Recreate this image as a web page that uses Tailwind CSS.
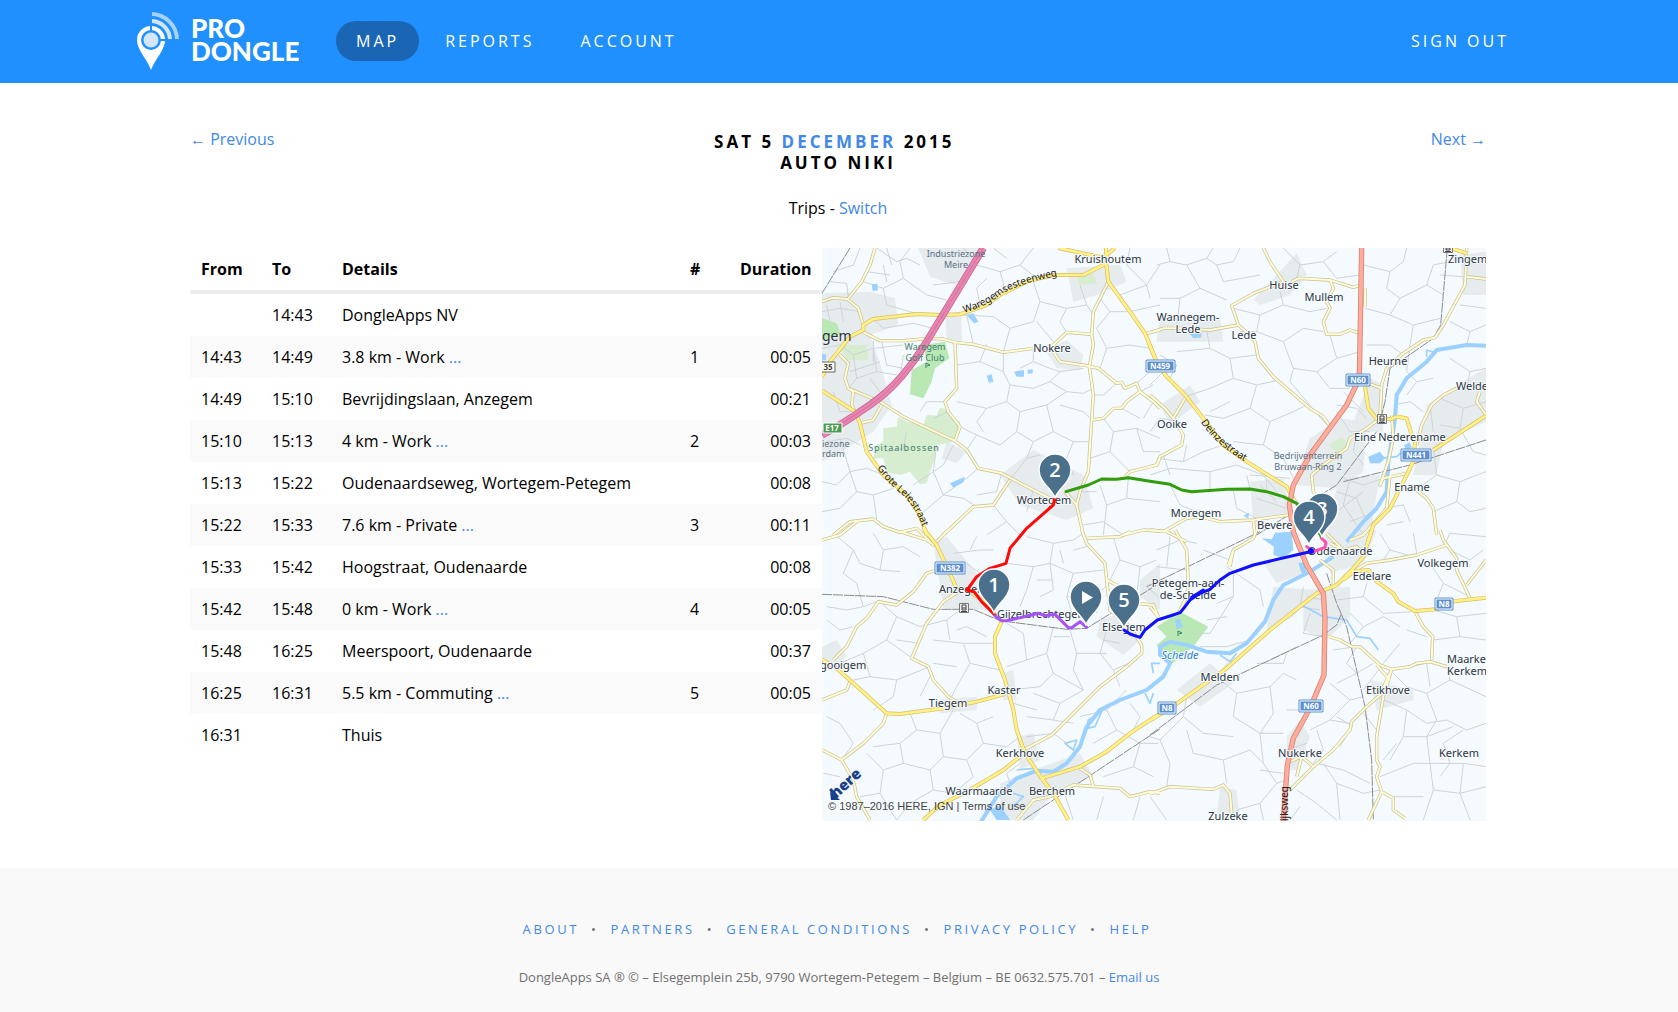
<!DOCTYPE html>
<html lang="en">
<head>
    <meta charset="UTF-8">
    <meta name="viewport" content="width=device-width, initial-scale=1.0">
    <title>Pro Dongle - Trips</title>
    <script src="https://cdn.jsdelivr.net/npm/@tailwindcss/browser@4"></script>
</head>
<body class="min-h-screen flex flex-col bg-white text-black text-base font-['Open_Sans',sans-serif]">

    <header class="bg-[#2090ff] text-white">
        <div class="mx-auto max-w-[1404px] h-[83px] pr-3 pb-[2px] flex items-center">
            <a href="#" class="flex items-center gap-3 w-[199px]" aria-label="Pro Dongle">
                <svg class="w-[42px] h-[60px]" viewBox="0 0 42 60" fill="none">
                    <path d="M14 59C10 48 0 39 0 29a14 14 0 0 1 28 0C28 39 18 48 14 59z" fill="#fff"/>
                    <path d="M14 12v10M21 29h9" stroke="#2090ff" stroke-width="2"/>
                    <circle cx="14" cy="29" r="10" fill="#2090ff"/>
                    <circle cx="14" cy="29" r="7.500" fill="#d2e7ff"/>
                    <path d="M15 10A19 19 0 0 1 33 28" stroke="#d2e7ff" stroke-width="4"/>
                    <path d="M15 3A26 26 0 0 1 40 28" stroke="#a4d1ff" stroke-width="4"/>
                </svg>
                <span class="pb-[2px] font-['Lato',sans-serif] font-black text-[26px] leading-[23px]">PRO<br>DONGLE</span>
            </a>
            <nav class="flex flex-1 items-center gap-[6px] font-medium tracking-[3px]">
                <a href="#" class="h-10 px-5 leading-10 rounded-full bg-[#1a66b5]">MAP</a>
                <a href="#" class="h-10 px-5 leading-10">REPORTS</a>
                <a href="#" class="h-10 px-5 leading-10">ACCOUNT</a>
                <a href="#" class="h-10 px-5 leading-10 ml-auto">SIGN OUT</a>
            </nav>
        </div>
    </header>

    <main class="mx-auto w-full max-w-[1298px] pr-[2px] pt-11 pb-[47px]">
        <div class="flex justify-between pb-7">
            <a href="#" class="flex-1 text-[#4288e6]"><span class="font-['Liberation_Sans',sans-serif]">←</span> Previous</a>
            <div class="text-center">
                <h1 class="pt-1 text-[17px] leading-[21px] font-bold tracking-[3px]">SAT 5 <a href="#" class="text-[#4288e6]">DECEMBER</a> 2015&nbsp;<br>AUTO NIKI</h1>
                <p class="pt-[23px]">Trips - <a href="#" class="text-[#4288e6]">Switch</a></p>
            </div>
            <a href="#" class="flex-1 text-right text-[#4288e6]">Next <span class="font-['Liberation_Sans',sans-serif]">→</span></a>
        </div>

        <div class="grid grid-cols-[632fr_664fr] items-start">
            <table class="w-full table-fixed text-left">
                <colgroup>
                    <col class="w-[71px]"><col class="w-[70px]"><col><col class="w-[50px]"><col class="w-[93px]">
                </colgroup>
                <thead>
                    <tr class="h-11 border-b-4 border-[#ededed] font-bold">
                        <th class="px-[11px]">From</th><th class="px-[11px]">To</th><th class="px-[11px]">Details</th><th class="px-[11px]">#</th><th class="px-[11px] text-right">Duration</th>
                    </tr>
                </thead>
                <tbody class="[&_td]:px-[11px] [&_td]:py-[9px] [&_td:last-child]:text-right [&_a]:text-[#4288e6] [&_tr:nth-child(even)]:bg-[#fafafa]">
                    <tr><td></td><td>14:43</td><td>DongleApps NV</td><td></td><td></td></tr>
                    <tr><td>14:43</td><td>14:49</td><td>3.8 km - Work <a href="#">...</a></td><td>1</td><td>00:05</td></tr>
                    <tr><td>14:49</td><td>15:10</td><td>Bevrijdingslaan, Anzegem</td><td></td><td>00:21</td></tr>
                    <tr><td>15:10</td><td>15:13</td><td>4 km - Work <a href="#">...</a></td><td>2</td><td>00:03</td></tr>
                    <tr><td>15:13</td><td>15:22</td><td>Oudenaardseweg, Wortegem-Petegem</td><td></td><td>00:08</td></tr>
                    <tr><td>15:22</td><td>15:33</td><td>7.6 km - Private <a href="#">...</a></td><td>3</td><td>00:11</td></tr>
                    <tr><td>15:33</td><td>15:42</td><td>Hoogstraat, Oudenaarde</td><td></td><td>00:08</td></tr>
                    <tr><td>15:42</td><td>15:48</td><td>0 km - Work <a href="#">...</a></td><td>4</td><td>00:05</td></tr>
                    <tr><td>15:48</td><td>16:25</td><td>Meerspoort, Oudenaarde</td><td></td><td>00:37</td></tr>
                    <tr><td>16:25</td><td>16:31</td><td>5.5 km - Commuting <a href="#">...</a></td><td>5</td><td>00:05</td></tr>
                    <tr><td>16:31</td><td></td><td>Thuis</td><td></td><td></td></tr>
                </tbody>
            </table>

            <svg class="w-full h-auto bg-[#f4fafd]" viewBox="0 0 664 573" fill="none" stroke-linejoin="round">
                <defs>
                    <!-- the four map sheets are drawn at 3x -->
                    <g id="minor">
                        <g transform="translate(-2 -3) scale(.33333)">
                            <path d="M170 9L230 50 260 40 300 60M85 160L130 110 190 130 250 100 320 150 380 165M250 100L240 50 270 9M190 130L200 180 270 200 290 207M140 80L210 90M160 222L190 250 280 235 340 250M430 9L470 60 540 80 600 60 640 9M540 80L560 150M600 60L650 100M500 100L470 130 480 180M640 110L660 170 640 230 570 250 520 215 430 210M570 250L550 322M660 170L740 190 800 180 820 210M740 190L720 230 740 262M780 120L800 180M650 230L700 290M440 210L460 298M6 200L60 190 120 200M20 180L30 230M60 170L70 230M6 310L60 300 100 330 160 310 250 300M100 330L110 400 85 430M160 310L170 380 110 400M170 380L230 390M160 287L160 350M40 440L60 500 105 500M185 290L200 360 250 370M150 400L180 440M90 380L180 350M250 330L240 400 200 440"/>
                            <path d="M410 360L480 350 550 380 570 420 640 430 690 410 720 380 790 370M480 350L500 298M550 322L550 380M640 310L640 350 690 370 720 380M640 350L600 370M570 420L560 470 500 490 410 470M560 470L600 500 680 480 740 440 790 445 820 430M690 410L740 440M600 500L590 560 540 600 470 570 420 545M590 560L640 590 700 560 760 590 810 590M680 480L700 560M720 480L790 500 815 525M640 590L620 640 570 705M620 640L660 630M760 590L740 640 760 690M470 570L440 615M500 490L470 530 490 560M840 370L860 310 930 300 990 310M860 310L830 250 870 200 930 200M870 200L840 160M930 200L1020 180M900 150L980 120 1020 60M930 9L920 60 980 120M980 120L990 160M890 415L850 450 820 450M950 415L990 380M960 440L1000 420M850 520L880 560 950 550 1020 580M880 560L870 620 810 640M870 620L930 680M950 550L970 620 1020 620M905 490L960 520M1000 470L970 520"/>
                            <path d="M20 590L80 580 120 600M60 580L90 680 50 720 6 710M90 680L140 670 190 690M90 680L110 740 60 790 6 800M110 740L160 750 220 730M160 750L170 822M260 560L250 610 200 620M350 600L340 680 280 720M400 600L370 660 340 680 370 750 300 810M370 750L430 760 470 785M475 670L440 700 370 750M545 685L530 740 470 750M370 470L320 470 300 500M385 500L340 520M520 780L560 830 600 870M560 830L500 870M640 735L620 800M840 720L860 780 850 870M860 780L920 760 1020 770M925 698L920 760M790 840L850 830 910 870M780 740L830 740M30 110L80 115 85 160M120 9L100 60 40 80M200 9L215 60 M190 60L200 110M340 120L420 110M520 9L560 40"/>
                        </g>
                        <g transform="translate(328 -3) scale(.33333)">
                            <path d="M20 60L60 50 110 60 150 130 230 165M60 50L50 9M110 60L170 40 200 60 250 50 270 9M150 130L90 160 30 160M90 160L80 250M170 40L190 9M200 60L220 110 330 90M400 9L450 60 440 100M450 60L520 50 560 20M520 50L560 100 630 90M640 60L720 80 760 50 770 9M720 80L710 130 750 160 830 120 880 150M830 120L850 60 900 50M750 160L720 210 645 190M720 210L790 240 870 220M790 240L780 300M250 190L330 210 400 180 480 200 530 190M330 210L320 260 270 260M400 180L390 140M320 260L400 290 460 250 520 260M400 290L430 370 420 410 530 540M430 370L500 380 560 340 630 320M500 380L540 430 600 430M560 340L540 270M320 330L240 340 180 310 80 320M180 310L170 255M240 340L250 400 180 430 105 455M250 400L320 420 390 405M320 420L300 490 220 520 165 510M300 490L360 530 430 500 470 480M360 530L340 600 250 590M340 600L400 640 430 700M30 330L80 360 60 400M0 420L40 380M0 560L30 520 90 530M180 500L240 470M760 330L720 300 650 300M940 60L1008 40M930 180L1008 190M900 230L960 260 1008 240M940 95L870 90M960 260L950 300"/>
                            <path d="M20 640L100 650 160 620 220 600M0 690L60 670 180 680 260 660 340 690 380 740M100 650L110 600M60 718L90 780 140 800M180 740L180 680M60 690L40 630M250 735L260 790 320 820M300 732L290 690M300 690L420 700M330 720L380 770M350 700L350 740M320 760L410 790M900 340L960 380 1008 370M960 380L950 430M870 460L940 490 1008 470M940 490L930 550 870 540M930 550L970 620 1008 630M780 300L770 380 800 410 850 400M770 450L800 410M840 480L850 560M850 610L860 690 930 710 1008 680M860 690L790 740M930 710L920 770 960 800 1008 790M920 770L850 800M730 480L780 470 820 500M560 480L620 490 650 520M560 500L600 560 660 560M580 440L640 500M620 560L610 620 640 660M580 700L640 720 700 700M560 740L620 760 650 830M600 700L580 780 640 870M640 740L560 800M600 830L680 800M700 790L760 780 780 830M710 840L760 830"/>
                        </g>
                        <g transform="translate(-2 282) scale(.33333)">
                            <path d="M40 10L100 60 120 100 180 120 240 125M100 60L70 130 110 160 130 230M180 120L190 60 250 50 300 80M190 60L160 10M20 230L80 240 130 230 170 215M20 270L60 300 100 290M180 215L230 260 300 290 380 270 420 240M230 260L200 330 130 370 60 400M200 330L270 380M230 330L300 340M130 370L150 440 100 450M150 440L230 450 330 410M230 450L220 500 160 540M300 500L330 440M340 330L430 340 520 340M380 270L390 330M430 340L450 400 540 420M450 400L410 470 390 510M410 410L340 400M410 300L440 290 500 320M560 280L610 310 620 390 560 410M620 390L680 370 700 290M680 370L700 430 660 470 570 480M700 320L750 320M750 300L770 370 860 370M770 370L760 420 790 480M860 300L840 370 880 420 950 390M850 330L900 340M700 430L790 480 720 520 640 490M720 520L700 570 620 560M700 570L760 580M580 520L650 540"/>
                            <path d="M620 20L700 40 760 30 790 10M700 40L690 100 640 110 560 100M690 100L760 130 850 120M690 100L700 180 660 200M640 110L620 180 600 230M760 130L740 200 760 260M740 200L830 190 860 170M830 190L830 250M880 20L900 90 960 110 1010 90M900 90L870 150M960 110L950 200 910 180M980 170L1015 200M650 150L700 150M730 100L720 60M800 50L760 60M520 60L480 60 400 70M440 100L480 130M450 60L470 20M20 560L60 580 100 640 65 690M160 650L240 640 290 600 360 610 400 540M240 640L250 700 190 720 140 670M290 600L270 550M360 610L370 680 330 720 250 700M370 680L440 690 490 640 560 650 600 620M490 640L470 580 520 560M440 690L460 740 400 790M330 720L340 780 270 820 230 870M190 720L180 790 120 800M180 790L230 870M10 730L60 740M340 780L400 790M420 550L470 580M600 700L560 730 570 760M620 620L700 610 740 640M780 560L860 540 920 480M860 540L890 600 820 640M890 600L960 640 1015 640M930 520L960 560 940 600M960 640L940 710 850 740M940 710L1000 740M850 800L830 870M960 800L940 870M730 780L760 870M880 420L900 470"/>
                        </g>
                        <g transform="translate(328 282) scale(.33333)">
                            <path d="M20 60L90 30 140 40M20 110L110 120M60 20L50 110M160 60L240 90M230 110L330 180 340 230M250 130L250 200 180 310 130 310M250 200L200 220M170 270L230 260M150 350L230 350 300 330M240 390L200 440 260 490 250 560 330 610 400 610M260 490L360 470 400 430 440 450M360 470L370 550 330 610M320 400L400 400 410 370M360 390L440 350M110 500L100 560 160 610 250 620M100 560L30 630 0 620M110 600L130 670 220 690M30 630L60 700 50 770M220 690L230 760M220 690L300 660 340 700M330 610L340 700 380 760 330 820 260 840M380 760L410 750M330 820L340 870M0 800L50 870M540 460L600 510 640 500M600 510L540 570 480 600M540 570L600 580M500 600L520 660 490 700M640 480L700 400 750 340M620 350L590 400 620 430 670 400M620 430L560 460M550 360L620 350M600 250L640 290 700 260 750 290M640 290L600 340M560 210L640 200 650 160M640 200L700 250 790 245M460 170L450 230 510 240M470 200L520 210M480 250L460 310 520 320"/>
                            <path d="M690 10L720 60 790 80M790 10L800 70M720 60L700 90M880 50L900 10 1008 20M900 60L960 90 1000 60M840 100L880 160 860 210M880 160L960 200M850 240L920 260 1008 250M920 260L930 320 1008 330M930 320L850 330M770 300L830 320M780 410L830 400 840 470M730 430L770 470 830 490 860 570 830 620 840 700M830 490L900 450 1008 500M900 450L890 410M770 540L830 580 890 570 950 600 1008 580M830 620L910 590M680 500L770 540 760 620 720 690 M760 620L830 620M740 640L700 690M640 550L680 600M560 560L610 590M520 700L560 760 640 790 690 780M560 760L570 870M440 780L500 820 560 870M450 830L420 870M500 700L580 720 660 760M690 740L790 700 840 700 940 700 1008 710M840 700L850 780 820 870M850 780L930 790 1008 770M930 790L960 870M730 800L820 800M940 700L930 790M870 740L900 700 880 640 940 600M600 600L570 650 M410 540L460 540M410 660L470 640M330 720L400 730"/>
                        </g>
                    </g>
                    <g id="local">
                        <g transform="translate(-2 -3) scale(.33333)">
                            <path d="M165 9L150 60 125 110 85 160M6 170L40 158 82 162 115 190 130 240M130 262L180 287 250 287 330 280 370 282 405 292 460 298 550 322 640 310M405 292L410 430 375 470 385 500 420 545 405 588M85 430L180 470 250 515 405 588 440 615 475 670 545 685 640 735 700 765M60 330L85 355 75 400 85 430 100 440 95 480 105 500M120 535L160 525 185 480M700 300L740 262 815 268M865 110L820 200 815 268 820 300 808 365 820 450 815 525 805 680 780 740 770 780 790 870M700 320L720 350 800 362 835 370 890 415 905 412 915 430 950 415 960 440 920 470 905 490 880 490 850 520 815 525M960 440L1000 470 1020 490M735 740L770 780M570 705L520 780 460 785 370 870M40 870L90 830 160 822 190 845 240 862 290 850 330 890M980 265L1020 255M915 695L930 680 1010 660 1020 640M910 870L970 855 1020 858"/>
                        </g>
                        <g transform="translate(328 -3) scale(.33333)">
                            <path d="M340 9L360 50 400 110M425 110L445 100 540 105 610 127 635 120M400 110L310 145 245 182 265 240 180 255 90 250 40 250 0 263M540 105L550 130 530 170 540 190 520 230 530 268 570 268 600 255 630 265M265 240L290 262 315 290 325 340 370 395 480 490 520 515 540 545M105 460L70 520 100 570 95 600 30 635 20 660 0 665M0 450L45 490 70 520M950 9L945 120 880 240 855 278 820 285 760 325 710 370 695 420 690 510M655 415L695 430M645 130L645 185M950 95L1008 102M920 430L880 450 845 480 815 540 800 600M1008 510L980 470 990 440M690 520L650 550 600 580 590 610 520 660 485 690 490 740 520 780M725 510L730 580 715 650 690 720 700 700 770 685M720 690L710 790 640 870 600 885M780 720L830 760 850 790 860 870M40 860L110 820 150 815 210 830 310 825 415 810M310 825L315 870M430 760L450 790M0 855L50 860 110 890"/>
                        </g>
                        <g transform="translate(-2 282) scale(.33333)">
                            <path d="M6 30L60 15 110 -25M320 30L340 45 385 0M320 30L240 5M350 120L320 130 280 185 230 225 175 215 140 265 110 290 80 350 40 390M415 185L370 215 320 280 275 385 325 410 340 450 385 500 410 515M200 550L190 580 130 640 65 690 6 660M65 690L100 750 110 800 150 870M785 0L800 40 855 100 860 150 870 240 930 290 965 345 965 370 920 410 840 470 770 540 695 615 610 660M860 150L890 165 950 220 1000 225 1015 260M800 25L900 20 930 5M6 510L80 480 90 455M690 800L760 765 900 775 930 800 990 785 1020 790M780 715L810 735 820 770M690 800L640 810 590 870"/>
                        </g>
                        <g transform="translate(328 282) scale(.33333)">
                            <path d="M75 0L110 60 115 160 110 200 85 250M250 60L240 110M320 0L310 25 250 60 235 105M0 230L25 262M530 318L570 330 605 350 630 350 690 405 725 418 780 410 800 400 840 395 890 410M725 418L690 495 650 530 605 575 600 600 550 660 490 710 420 780M725 418L700 500 680 620 680 690 690 710 680 740 695 785 730 805 730 840 765 865M680 405L720 450M695 785L655 870M795 245L820 290 848 320 845 390M600 130L650 100 720 90 800 75 890 45M870 0L880 30 920 85 920 120 960 205M1008 90L950 165M530 10L560 40 580 60M510 90L550 120 550 170M0 792L60 770 190 778 220 765 240 790 245 850M420 695L455 680 490 710M455 680L440 740M650 80L620 50 580 60 540 40"/>
                        </g>
                    </g>
                    <g id="main">
                        <g transform="translate(-2 -3) scale(.33333)">
                            <path d="M6 395L30 350 90 275 130 255 130 240 160 222 290 207 360 210 420 208 500 180 540 150 620 110 700 90 790 90 850 60 860 50 858 9M715 9L850 38 885 9M858 50L865 110 930 200 975 265 1010 350 1040 395M6 437L105 500 120 535 140 620 190 690 260 750 300 810 320 870"/>
                        </g>
                        <g transform="translate(328 -3) scale(.33333)">
                            <path d="M-5 290L15 340 50 395 105 450 160 520 220 600 290 650 410 725 430 760M645 425L655 490 680 522 725 522 740 515 770 520 785 570 795 590 790 650 720 790 670 840 655 890M850 615L1008 512M900 9L950 25"/>
                        </g>
                        <g transform="translate(-2 282) scale(.33333)">
                            <path d="M310 -5L350 45 385 120 410 175 440 180 480 205 545 275 525 320 525 370 555 450 580 540 590 600 615 670 665 745 700 790 745 870M6 388L50 415 200 550 240 552 370 535 470 515 555 492M310 870L360 825 440 785 550 720 600 680M665 745L780 710 860 665 930 610 1020 550"/>
                        </g>
                        <g transform="translate(328 282) scale(.33333)">
                            <path d="M0 572L60 535 230 415 360 300 500 190 560 165 610 115 640 80 665 0M580 150L610 125 655 120 680 155 730 190 745 215 795 243 860 238 900 215 1008 203"/>
                        </g>
                    </g>
                    <g id="river">
                        <path transform="translate(328 -3) scale(.33333)" d="M1008 302L950 300 860 315 830 350 770 400 740 450 735 520 715 650 710 740 680 790 640 830 590 890"/>
                        <path transform="translate(328 282) scale(.33333)" d="M550 80L480 125 400 165 370 210 345 275 290 340 240 370 170 365 110 345 60 335 30 350 30 375 60 400 40 440 -10 480 -90 510 -150 540 -190 590 -210 650 -250 700 -290 725 -340 722 -400 745 -460 800 -510 880"/>
                    </g>
                    <path id="n60" transform="translate(328 -3) scale(.33333)" d="M635 9L632 180 628 400 590 480 480 630 430 720 418 780 430 860 470 960 520 1045 525 1120 522 1290 480 1390 430 1480 412 1560 400 1730"/>
                    <path id="pin" d="M0 0C-3 -9 -16 -16 -16 -28a16 16 0 0 1 32 0C16 -16 3 -9 0 0z" fill="#4b708c" stroke="#fff" stroke-width="1.500"/>
                    <g id="station"><path d="M-4.500 -4.500h9v9h-9z" fill="#eee" stroke="#777"/><path d="M-2 -3h4v5h-4zM-2 0h4M-3 3.500h6" stroke="#444"/></g>
                    <path id="deinze" d="M379 174Q393 198 436 221"/>
                    <path id="waregem" d="M142 65Q165 58 180 46Q200 34 245 26"/>
                    <path id="leie" d="M55 220Q66 236 82 248Q96 262 108 298"/>
                </defs>

                <!-- built-up areas -->
                <g fill="#e6ebee">
                    <path transform="translate(-2 -3) scale(.33333)" d="M295 9H490L460 80 400 118 330 95zM6 145L150 140 225 160 235 240 150 270 185 370 215 480 160 560 80 610 6 650zM740 70L900 60 920 110 830 150 760 170zM675 315L740 285 790 330 780 375 710 370zM540 690L640 615 790 690 820 790 740 825 600 780zM375 210L425 215 425 290 380 280zM380 590L440 620 410 655 365 640z"/>
                    <path transform="translate(328 -3) scale(.33333)" d="M310 165L440 25 470 90 420 150 330 180zM30 215L210 215 220 290 20 290zM30 480L120 420 150 470 60 540zM930 30L1008 20V150L940 150zM480 580L570 520 650 530 640 680 560 730 430 720zM570 700L690 690 660 870H520zM300 710L400 700 420 800 310 830zM830 480L920 420 1008 370V530L880 590 860 690 790 690zM660 400L700 420 700 560 600 560z"/>
                    <path transform="translate(-2 282) scale(.33333)" d="M340 40L380 20 470 130 500 240 370 235zM6 350L50 330 80 380 40 410 6 390zM840 270L900 250 960 330 910 375 830 320zM345 510L470 500 470 540 360 550zM550 430L580 420 590 510 550 510zM590 620L640 610 660 690 600 720zM540 760L640 720 780 670 820 740 700 790 640 870H540zM960 150L1020 100V240L960 200z"/>
                    <path transform="translate(328 282) scale(.33333)" d="M340 100L450 70 460 130 380 160zM520 0H680L640 100 540 130zM370 170L500 180 430 260 350 300zM460 180L600 170 600 260 530 330 460 300zM80 480L180 400 250 460 150 530zM660 450L790 480 790 510 680 540zM410 620L450 570 480 620 440 720 410 720zM210 770L260 780 270 870H200z"/>
                </g>
                <!-- woods and parks -->
                <g fill="#b9e8b4">
                    <path transform="translate(-2 -3) scale(.33333)" d="M310 300L375 290 388 340 345 370 335 410 310 460 270 448 275 375 320 350zM6 220L50 235 62 268 6 285z"/>
                    <path transform="translate(328 282) scale(.33333)" d="M20 290L90 245 175 290 130 350 60 405 20 345 50 320z"/>
                </g>
                <g fill="#d6edcf">
                    <path transform="translate(-2 -3) scale(.33333)" d="M235 515L260 530 310 540 320 510 350 512 360 488 390 495 400 520 420 530 418 560 405 590 350 600 345 640 330 680 320 715 300 718 270 680 240 690 200 680 190 640 160 640 170 600 190 590 190 550 230 545zM60 300L140 300 145 345 80 345zM770 95L820 85 830 115 780 120z"/>
                    <path transform="translate(328 -3) scale(.33333)" d="M535 600L575 575 600 605 560 625z"/>
                </g>

                <use href="#minor" stroke="#cdd3d6" stroke-width="3"/>

                <!-- water -->
                <g fill="#9cd0ff">
                    <path transform="translate(-2 -3) scale(.33333)" d="M155 118L172 116 174 136 158 138zM440 210L460 205 475 230 462 235zM500 392L515 388 520 410 507 413zM582 380L612 375 612 395 590 395zM622 375L638 373 638 385 624 386zM390 715L435 695 430 712 400 728zM6 328H18V346H6z"/>
                    <path transform="translate(328 -3) scale(.33333)" d="M655 635L690 620 705 640 690 655 660 655zM762 600L780 592 785 610 768 615zM120 268L155 264 152 278 130 280zM280 812L297 803 295 820z"/>
                    <path transform="translate(328 282) scale(.33333)" d="M335 25L365 28 375 8 425 5 430 60 400 85 370 75 372 50zM445 100L465 95 470 130 455 130zM75 268H90L98 290 80 298z"/>
                    <path transform="translate(-2 282) scale(.33333)" d="M510 840L540 825 570 870H530z"/>
                </g>
                <use href="#river" stroke="#9cd0ff" stroke-width="12"/>
                <g stroke="#9cd0ff" stroke-width="5">
                    <path transform="translate(328 282) scale(.33333)" d="M455 225L520 260 590 270 620 320 660 325 685 360M10 430L5 400 30 400M210 375L240 395 260 370M590 30L620 0"/>
                    <path transform="translate(-2 282) scale(.33333)" d="M845 545L805 570 800 595 825 590zM735 640L770 630 760 660zM975 490L990 520 1000 490M590 720L640 715M550 780L610 800 580 830"/>
                    <path transform="translate(328 -3) scale(.33333)" d="M860 325L830 315 830 335M690 640L740 635 770 610"/>
                </g>

                <!-- railways -->
                <g stroke="#8b8b8b" stroke-dasharray="30 3" stroke-width="3">
                    <path transform="translate(-2 -3) scale(.33333)" d="M90 9L6 145"/>
                    <path transform="translate(328 -3) scale(.33333)" d="M892 9L872 240 850 280 720 370 705 470 690 530M1008 585L780 660 580 710M680 560L560 720 320 870"/>
                    <path transform="translate(-2 282) scale(.33333)" d="M6 193L190 200 340 238 460 238 540 272 740 298 800 295 1010 165M610 870L1020 597"/>
                    <path transform="translate(328 282) scale(.33333)" d="M-10 170L330 5M0 615L200 465 520 315 560 285 575 250M530 130L560 220 590 290 645 530 665 690 670 870"/>
                </g>

                <use href="#local" stroke="#c5bf97" stroke-width="10"/>
                <use href="#local" stroke="#fffbd4" stroke-width="6"/>
                <use href="#main" stroke="#d9bb6a" stroke-width="12"/>
                <use href="#main" stroke="#fff184" stroke-width="8"/>
                <use href="#n60" stroke="#d4847a" stroke-width="16"/>
                <use href="#n60" stroke="#ffac9b" stroke-width="11"/>
                <g transform="translate(-2 -3) scale(.33333)">
                    <path d="M490 9L320 290C250 400 200 450 120 500Q70 535 6 570" stroke="#c96795" stroke-width="22"/>
                    <path d="M490 9L320 290C250 400 200 450 120 500Q70 535 6 570" stroke="#e884b0" stroke-width="17"/>
                    <path d="M490 9L320 290C250 400 200 450 120 500Q70 535 6 570" stroke="#c96795" stroke-width="2"/>
                </g>

                <use href="#station" x="560" y="171"/>
                <use href="#station" x="142" y="360"/>
                <use href="#station" x="626" y="0"/>
                <path d="M104 120v-5l4 2-3 1M356 388v-5l4 2-3 1" stroke="#3f8070"/>

                <!-- place names -->
                <g class="text-[11px] font-['Noto_Sans','Open_Sans',sans-serif] [paint-order:stroke]" fill="#2e3440" stroke="#f4fafd" stroke-width="2" text-anchor="middle">
                    <text x="286" y="15">Kruishoutem</text>
                    <text x="230" y="104">Nokere</text>
                    <text x="222" y="256">Wortegem</text>
                    <text x="462" y="41">Huise</text>
                    <text x="502" y="53">Mullem</text>
                    <text x="366" y="73">Wannegem-</text>
                    <text x="366" y="85">Lede</text>
                    <text x="422" y="91">Lede</text>
                    <text x="566" y="117">Heurne</text>
                    <text x="626" y="15" text-anchor="start">Zingem</text>
                    <text x="634" y="142" text-anchor="start">Welden</text>
                    <text x="350" y="180">Ooike</text>
                    <text x="543" y="193">Eine</text>
                    <text x="590" y="193">Nederename</text>
                    <text x="590" y="243">Ename</text>
                    <text x="374" y="269">Moregem</text>
                    <text x="435" y="281" text-anchor="start">Bevere</text>
                    <text x="117" y="345" text-anchor="start">Anzegem</text>
                    <text x="175" y="370" text-anchor="start">Gijzelbrechtegem</text>
                    <text x="-2" y="421" text-anchor="start">gooigem</text>
                    <text x="182" y="446">Kaster</text>
                    <text x="126" y="459">Tiegem</text>
                    <text x="280" y="383" text-anchor="start">Elsegem</text>
                    <text x="198" y="509">Kerkhove</text>
                    <text x="157" y="547">Waarmaarde</text>
                    <text x="230" y="547">Berchem</text>
                    <text x="518" y="307">Oudenaarde</text>
                    <text x="621" y="319">Volkegem</text>
                    <text x="550" y="332">Edelare</text>
                    <text x="366" y="339">Petegem-aan-</text>
                    <text x="366" y="351">de-Schelde</text>
                    <text x="398" y="433">Melden</text>
                    <text x="566" y="446">Etikhove</text>
                    <text x="625" y="415" text-anchor="start">Maarke-</text>
                    <text x="625" y="427" text-anchor="start">Kerkem</text>
                    <text x="637" y="509">Kerkem</text>
                    <text x="478" y="509">Nukerke</text>
                    <text x="406" y="572">Zulzeke</text>
                    <text x="358" y="411" fill="#2f7fd0" font-style="italic">Schelde</text>
                </g>
                <g class="text-[10px] font-['Noto_Sans','Open_Sans',sans-serif]" fill="#222">
                    <text><textPath href="#waregem">Waregemsesteenweg</textPath></text>
                    <text><textPath href="#leie">Grote Leiestraat</textPath></text>
                    <text><textPath href="#deinze">Deinzestraat</textPath></text>
                    <text transform="translate(466 573) rotate(-90)">ijksweg</text>
                </g>
                <text x="0" y="93" class="text-sm font-['Noto_Sans','Open_Sans',sans-serif]" fill="#2e3440">gem</text>
                <g class="text-[9px] font-['Noto_Sans','Open_Sans',sans-serif]" fill="#5a6f82" text-anchor="middle">
                    <text x="134" y="9">Industriezone</text>
                    <text x="134" y="20">Meire</text>
                    <text x="0" y="199" text-anchor="start">iezone</text>
                    <text x="0" y="209" text-anchor="start">rdam</text>
                    <text x="486" y="211">Bedrijventerrein</text>
                    <text x="486" y="222">Bruwaan-Ring 2</text>
                    <text x="103" y="102" fill="#3f8070">Waregem</text>
                    <text x="103" y="113" fill="#3f8070">Golf Club</text>
                    <text x="82" y="203" fill="#3f8070" class="tracking-[1px]">Spitaalbossen</text>
                </g>

                <!-- road shields -->
                <g fill="#5b8fce" stroke="#fff">
                    <path d="M325 113h27v10h-27zM525 127h22v10h-22zM580 202h28v10h-28zM114 315h28v10h-28zM337 455h16v10h-16zM614 351h16v10h-16zM478 453h22v10h-22z" stroke="#5b8fce" stroke-width="3"/>
                    <path d="M325 113h27v10h-27zM525 127h22v10h-22zM580 202h28v10h-28zM114 315h28v10h-28zM337 455h16v10h-16zM614 351h16v10h-16zM478 453h22v10h-22z"/>
                    <path d="M1 175h19v10h-19z" fill="#4d9a52"/>
                    <path d="M-4 114h17v10h-17z" fill="#fff" stroke="#665" />
                </g>
                <g class="text-[8px] font-bold font-['Noto_Sans','Open_Sans',sans-serif]" fill="#fff" text-anchor="middle">
                    <text x="338" y="121">N459</text>
                    <text x="536" y="135">N60</text>
                    <text x="594" y="210">N441</text>
                    <text x="128" y="323">N382</text>
                    <text x="345" y="463">N8</text>
                    <text x="622" y="359">N8</text>
                    <text x="489" y="461">N60</text>
                    <text x="10" y="183">E17</text>
                    <text x="6" y="122" fill="#443">35</text>
                </g>

                <!-- trips -->
                <g stroke-width="9" stroke-linecap="round">
                    <path transform="translate(-2 282) scale(.33333)" d="M705 -95L700 -75 620 -5 570 55 558 100 510 115 470 140 445 175 440 180 462 185 485 215 525 255" stroke="#ff0a0a"/>
                    <path transform="translate(328 -3) scale(.33333)" d="M-252 740L-185 720 -145 702 -100 703 -65 698 0 709 60 718 95 735 125 740 230 733 300 732 350 740 400 755 440 775 490 830 515 878" stroke="#319c0c"/>
                    <path transform="translate(-2 282) scale(.33333)" d="M525 258L545 272 560 272 600 263 655 250 675 257 705 253 745 293 755 293 780 275 800 292" stroke="#a555f7"/>
                    <path transform="translate(328 282) scale(.33333)" d="M515 25L528 38 525 52 490 65 470 50" stroke="#ff50b4"/>
                    <path transform="translate(328 282) scale(.33333)" d="M-78 300L-60 312 -30 322 -15 300 22 270 60 258 90 248 105 230 120 210 150 190 180 178 210 150 240 130 310 105 480 65M125 202L160 180" stroke="#1010ff"/>
                    <circle cx="489" cy="303" r="3" fill="#1010ff" stroke="none"/>
                </g>

                <!-- pins -->
                <g class="text-xl font-semibold font-['Open_Sans',sans-serif]" fill="#fff" text-anchor="middle">
                    <use href="#pin" x="172" y="365"/><text x="172" y="344">1</text>
                    <use href="#pin" x="233" y="250"/><text x="233" y="229">2</text>
                    <use href="#pin" x="264" y="377"/><path d="M260 343v13l11 -6.500z"/>
                    <use href="#pin" x="302" y="380"/><text x="302" y="359">5</text>
                    <use href="#pin" x="500" y="289"/><text x="500" y="268">3</text>
                    <use href="#pin" x="487" y="297"/><text x="487" y="276">4</text>
                </g>

                <path d="M8 543l1 9 9 0z" fill="#173f8a"/>
                <text transform="translate(14 551) rotate(-42)" class="text-[15px] font-extrabold font-['Open_Sans',sans-serif]" fill="#173f8a">here</text>
                <text x="6" y="562" class="text-[11px] font-['Liberation_Sans',sans-serif]" fill="#444">© 1987–2016 HERE, IGN | Terms of use</text>
            </svg>
        </div>
    </main>

    <footer class="flex-1 bg-[#f9f9f9] pt-[50px] pb-6 text-center text-[13px] leading-[22px] text-[#707070]">
        <nav class="flex justify-center gap-3 pr-1 tracking-[0.2em]">
            <a href="#" class="text-[#4288e6]">ABOUT</a>
            <span>•</span>
            <a href="#" class="text-[#4288e6]">PARTNERS</a>
            <span>•</span>
            <a href="#" class="text-[#4288e6]">GENERAL CONDITIONS</a>
            <span>•</span>
            <a href="#" class="text-[#4288e6]">PRIVACY POLICY</a>
            <span>•</span>
            <a href="#" class="text-[#4288e6]">HELP</a>
        </nav>
        <p class="pt-[26px]">DongleApps SA ® © – Elsegemplein 25b, 9790 Wortegem-Petegem – Belgium – BE 0632.575.701 – <a href="#" class="text-[#4288e6]">Email us</a></p>
    </footer>
</body>
</html>
